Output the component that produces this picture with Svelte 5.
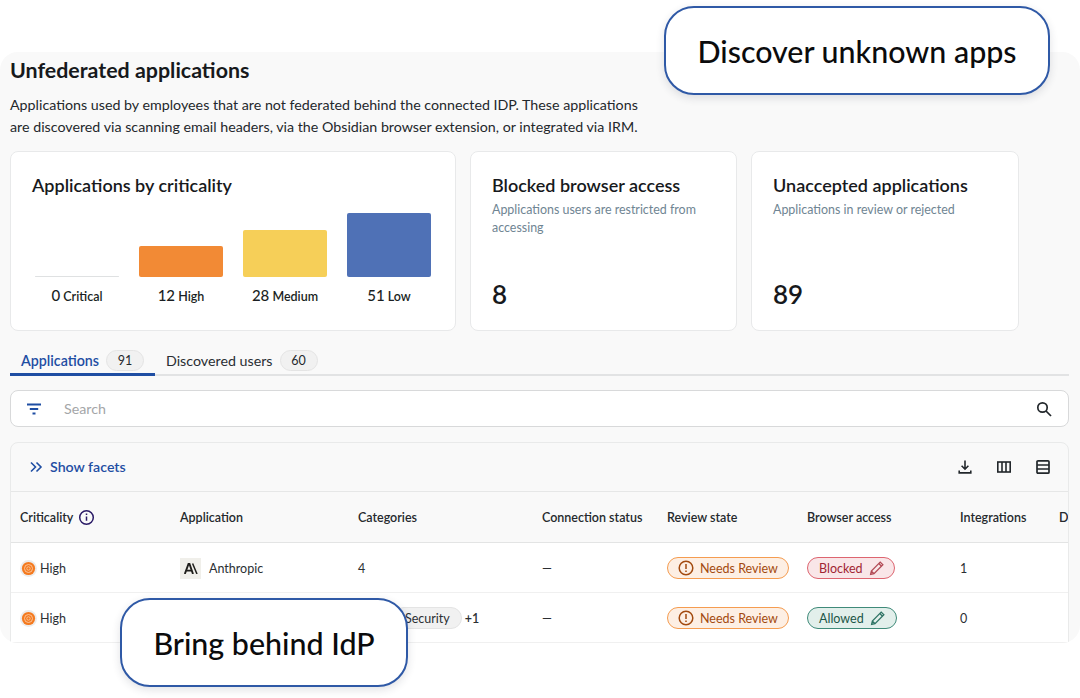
<script>
  const bars = [
    { count: 0, label: 'Critical', height: 1, color: '#dfe1e2' },
    { count: 12, label: 'High', height: 31, color: '#f28a35' },
    { count: 28, label: 'Medium', height: 47, color: '#f6cf58' },
    { count: 51, label: 'Low', height: 64, color: '#4f71b6' }
  ];
  const columns = ['Application', 'Categories', 'Connection status', 'Review state', 'Browser access', 'Integrations', 'D'];
</script>

<div class="page">
  <section class="panel">
    <h1>Unfederated applications</h1>
    <p class="intro">
      Applications used by employees that are not federated behind the connected IDP. These applications<br />
      are discovered via scanning email headers, via the Obsidian browser extension, or integrated via IRM.
    </p>

    <div class="cards">
      <div class="card chart-card">
        <h2>Applications by criticality</h2>
        <div class="chart">
          {#each bars as bar}
            <div class="bar-col">
              <div class="bar-area">
                <div class="bar" style="height: {bar.height}px; background: {bar.color}"></div>
              </div>
              <div class="bar-label"><span class="num">{bar.count}</span> {bar.label}</div>
            </div>
          {/each}
        </div>
      </div>
      <div class="card stat-card blocked">
        <h2>Blocked browser access</h2>
        <p>Applications users are restricted from accessing</p>
        <div class="stat">8</div>
      </div>
      <div class="card stat-card unaccepted">
        <h2>Unaccepted applications</h2>
        <p>Applications in review or rejected</p>
        <div class="stat">89</div>
      </div>
    </div>

    <div class="tabs">
      <div class="tab active">Applications <span class="count">91</span></div>
      <div class="tab">Discovered users <span class="count">60</span></div>
    </div>

    <div class="search">
      <svg class="filter" width="20" height="20" viewBox="0 0 20 20" fill="none" stroke="#1f4ea3" stroke-width="1.8">
        <path d="M2 5.5h14M4.8 10h8.4M7.5 14.5h3" />
      </svg>
      <span class="placeholder">Search</span>
      <svg class="magnifier" width="20" height="20" viewBox="0 0 20 20" fill="none" stroke="#22272b" stroke-width="1.7">
        <circle cx="8.5" cy="8.5" r="4.7" />
        <path d="M12 12l5 5" />
      </svg>
    </div>

    <div class="table">
      <div class="toolbar">
        <div class="facets">
          <svg width="14" height="14" viewBox="0 0 14 14" fill="none" stroke="#1f4ea3" stroke-width="1.6">
            <path d="M2 2.5L6.5 7 2 11.5M7.5 2.5L12 7l-4.5 4.5" />
          </svg>
          Show facets
        </div>
        <div class="tools">
          <svg width="16" height="16" viewBox="0 0 16 16" fill="none" stroke="#22272b" stroke-width="1.6">
            <path d="M8 1.5v8.5M4.6 6.8L8 10.2l3.4-3.4" />
            <path d="M2.2 11.5v2.4h11.6v-2.4" />
          </svg>
          <svg width="16" height="16" viewBox="0 0 16 16" fill="none" stroke="#22272b" stroke-width="1.6">
            <rect x="1.8" y="3" width="12.4" height="10" />
            <path d="M6 3v10M10 3v10" />
          </svg>
          <svg width="16" height="16" viewBox="0 0 16 16" fill="none" stroke="#22272b" stroke-width="1.7">
            <rect x="2" y="1.8" width="12" height="12.4" rx="1" />
            <path d="M2 6h12M2 10h12" />
          </svg>
        </div>
      </div>

      <div class="row head">
        <div class="cell">
          Criticality
          <svg class="info" width="17" height="17" viewBox="0 0 17 17" fill="none" stroke="#2a1a66" stroke-width="1.5">
            <circle cx="8.5" cy="8.5" r="6.8" />
            <path d="M8.5 7.5v4.2M8.5 4.6v1.5" />
          </svg>
        </div>
        {#each columns as col}
          <div class="cell">{col}</div>
        {/each}
      </div>

      <div class="row">
        <div class="cell">
          <svg class="target" width="17" height="17" viewBox="0 0 17 17" fill="none">
            <circle cx="8.5" cy="8.5" r="8.5" fill="#ececec" />
            <circle cx="8.5" cy="8.5" r="6.6" fill="#f47a1f" />
            <circle cx="8.5" cy="8.5" r="4" stroke="#fcc49a" stroke-width="1" />
            <circle cx="8.5" cy="8.5" r="1.7" stroke="#fcc49a" stroke-width="0.9" />
          </svg>
          High
        </div>
        <div class="cell">
          <span class="logo">
            <svg width="14" height="11" viewBox="0 0 14 11" fill="none" stroke="#1f1e1b" stroke-width="1.9">
              <path d="M0.8 11L4.5 1h1L9 11" />
              <path d="M2.3 7.6h5" />
              <path d="M8.6 0.5L13 11" stroke-width="1.5" />
            </svg>
          </span>
          Anthropic
        </div>
        <div class="cell">4</div>
        <div class="cell">—</div>
        <div class="cell">
          <span class="pill review">
            <svg width="16" height="16" viewBox="0 0 16 16" fill="none" stroke="#a34a0f" stroke-width="1.5">
              <circle cx="8" cy="8" r="6.8" />
              <path d="M8 4v5M8 10.4v1.6" />
            </svg>
            Needs Review
          </span>
        </div>
        <div class="cell">
          <span class="pill blocked-pill">
            Blocked
            <svg width="16" height="16" viewBox="0 0 15 15" fill="none" stroke="#b24a55" stroke-width="1.2">
              <path d="M1.5 13.5l.7-3.2L10.5 2l2.5 2.5-8.3 8.3zM9.2 3.3l2.5 2.5M2.2 10.3l2.5 2.5" />
            </svg>
          </span>
        </div>
        <div class="cell">1</div>
        <div class="cell"></div>
      </div>

      <div class="row">
        <div class="cell">
          <svg class="target" width="17" height="17" viewBox="0 0 17 17" fill="none">
            <circle cx="8.5" cy="8.5" r="8.5" fill="#ececec" />
            <circle cx="8.5" cy="8.5" r="6.6" fill="#f47a1f" />
            <circle cx="8.5" cy="8.5" r="4" stroke="#fcc49a" stroke-width="1" />
            <circle cx="8.5" cy="8.5" r="1.7" stroke="#fcc49a" stroke-width="0.9" />
          </svg>
          High
        </div>
        <div class="cell"></div>
        <div class="cell">
          <span class="chip">Security</span>
          <b class="more">+1</b>
        </div>
        <div class="cell">—</div>
        <div class="cell">
          <span class="pill review">
            <svg width="16" height="16" viewBox="0 0 16 16" fill="none" stroke="#a34a0f" stroke-width="1.5">
              <circle cx="8" cy="8" r="6.8" />
              <path d="M8 4v5M8 10.4v1.6" />
            </svg>
            Needs Review
          </span>
        </div>
        <div class="cell">
          <span class="pill allowed-pill">
            Allowed
            <svg width="16" height="16" viewBox="0 0 15 15" fill="none" stroke="#2f7465" stroke-width="1.2">
              <path d="M1.5 13.5l.7-3.2L10.5 2l2.5 2.5-8.3 8.3zM9.2 3.3l2.5 2.5M2.2 10.3l2.5 2.5" />
            </svg>
          </span>
        </div>
        <div class="cell">0</div>
        <div class="cell"></div>
      </div>
    </div>
  </section>

  <div class="callout discover">Discover unknown apps</div>
  <div class="callout bring">Bring behind IdP</div>
</div>

<style>
  :global(body) {
    margin: 0;
    background: #fff;
    font-family: Lato, "Liberation Sans", sans-serif;
    color: #1b1f23;
  }

  .page {
    position: relative;
    width: 1080px;
    height: 698px;
    padding-top: 52px;
    box-sizing: border-box;
    overflow: hidden;
  }

  .panel {
    height: 591px;
    box-sizing: border-box;
    background: #f9f9f9;
    border-radius: 18px;
    padding: 5px 11px 0 10px;
    overflow: hidden;
  }

  h1 {
    margin: 0;
    font-size: 21.4px;
    line-height: 26px;
    font-weight: 700;
    color: #17191c;
  }

  .intro {
    margin: 11px 0 0;
    font-size: 14.25px;
    line-height: 21.5px;
    color: #24282c;
    white-space: nowrap;
  }

  .cards {
    display: flex;
    gap: 14px;
    margin-top: 14px;
  }

  .card {
    height: 180px;
    box-sizing: border-box;
    background: #fff;
    border: 1px solid #e8e9ea;
    border-radius: 8px;
    padding: 21px 21px 0;
  }

  .chart-card { width: 446px; }
  .blocked { width: 267px; }
  .unaccepted { width: 268px; }

  h2 {
    margin: 0;
    font-size: 18px;
    line-height: 24px;
    font-weight: 600;
    color: #17191c;
  }

  .chart {
    display: grid;
    grid-template-columns: repeat(4, 84px);
    gap: 20px;
    margin: 15px 0 0 3px;
  }

  .bar-area {
    height: 65px;
    display: flex;
    align-items: flex-end;
  }

  .bar {
    width: 100%;
    border-radius: 2px;
  }

  .bar-label {
    margin-top: 9px;
    text-align: center;
    font-size: 12.5px;
    line-height: 18px;
    font-weight: 600;
    white-space: nowrap;
  }

  .bar-label .num { font-size: 15px; font-weight: 500; }

  .stat-card p {
    margin: 4px 0 0;
    font-size: 12.45px;
    line-height: 18px;
    color: #6f8593;
    height: 36px;
  }

  .stat {
    margin-top: 42px;
    font-size: 26px;
    line-height: 30px;
    font-weight: 600;
    color: #17191c;
  }

  .tabs {
    display: flex;
    height: 29px;
    margin-top: 14px;
    border-bottom: 2px solid #e2e3e4;
  }

  .tab {
    display: flex;
    align-items: center;
    gap: 7px;
    font-size: 14.25px;
    height: 31px;
    padding: 0 10px 0 11px;
    box-sizing: border-box;
    color: #2a2e33;
  }

  .tab.active {
    color: #1f4ea3;
    font-weight: 600;
    width: 145px;
    padding-top: 3px;
    border-bottom: 3px solid #1f4ea3;
  }

  .count {
    display: inline-block;
    min-width: 38px;
    height: 21px;
    line-height: 19px;
    box-sizing: border-box;
    text-align: center;
    border: 1px solid #e4e4e4;
    border-radius: 11px;
    background: #f1f1f1;
    font-size: 12.5px;
    font-weight: 400;
    color: #24282c;
  }

  .search {
    display: flex;
    align-items: center;
    height: 37px;
    box-sizing: border-box;
    margin-top: 14px;
    padding: 0 14px;
    background: #fff;
    border: 1px solid #d8d9da;
    border-radius: 8px;
  }

  .placeholder {
    margin-left: 19px;
    font-size: 14.25px;
    color: #a4a6a8;
    flex: 1;
  }

  .table {
    margin-top: 15px;
    border: 1px solid #e9eaea;
    border-radius: 8px 8px 0 0;
    overflow: hidden;
    font-size: 12.5px;
  }

  .toolbar {
    display: flex;
    align-items: center;
    justify-content: space-between;
    height: 49px;
    box-sizing: border-box;
    padding: 0 17px 1px 18px;
    border-bottom: 1px solid #e6e7e7;
  }

  .facets {
    display: flex;
    align-items: center;
    gap: 7px;
    font-size: 14.2px;
    font-weight: 600;
    color: #1f4ea3;
  }

  .tools {
    display: flex;
    gap: 23px;
  }

  .row {
    display: grid;
    grid-template-columns: 160px 178px 184px 125px 140px 153px 99px 20px;
    height: 50px;
    box-sizing: border-box;
    padding-top: 1px;
    background: #fff;
    border-bottom: 1px solid #f0f0f0;
  }

  .row.head {
    height: 51px;
    background: #f9f9f9;
    border-bottom: 1px solid #e3e4e4;
    font-weight: 600;
  }

  .cell {
    display: flex;
    align-items: center;
    gap: 3px;
    padding-left: 9px;
    white-space: nowrap;
    color: #2b2f33;
  }

  .row.head .cell {
    gap: 5px;
    color: #25292d;
  }

  .logo {
    display: inline-flex;
    align-items: center;
    justify-content: center;
    width: 21px;
    height: 21px;
    background: #f0efea;
    margin-right: 5px;
  }

  .pill {
    display: inline-flex;
    align-items: center;
    gap: 6px;
    height: 22px;
    box-sizing: border-box;
    border-radius: 11px;
    border: 1px solid;
    white-space: nowrap;
  }

  .review {
    padding: 0 10px;
    background: #fdefe4;
    border-color: #f59c50;
    color: #a34a0f;
  }

  .blocked-pill {
    padding: 0 9px 0 11px;
    background: #f9e6e8;
    border-color: #dd6570;
    color: #a12432;
  }

  .allowed-pill {
    padding: 0 10px 0 11px;
    background: #e2efeb;
    border-color: #3f8a79;
    color: #1c5647;
  }

  .chip {
    margin-left: 35px;
    padding: 0 11px;
    height: 22px;
    line-height: 21px;
    box-sizing: border-box;
    background: #f1f1f1;
    border: 1px solid #e4e4e4;
    border-radius: 11px;
  }

  .more {
    font-weight: 600;
    margin-left: 0;
  }

  .callout {
    position: absolute;
    display: flex;
    align-items: center;
    justify-content: center;
    height: 89px;
    box-sizing: border-box;
    background: #fff;
    border: 2px solid #2f59a6;
    border-radius: 30px;
    box-shadow: 0 3px 8px rgba(40, 50, 70, 0.14);
    font-size: 30.4px;
    font-weight: 500;
    color: #0b0b0c;
    white-space: nowrap;
  }

  .discover {
    left: 664px;
    top: 6px;
    width: 386px;
  }

  .bring {
    left: 120px;
    top: 598px;
    width: 288px;
  }
</style>
